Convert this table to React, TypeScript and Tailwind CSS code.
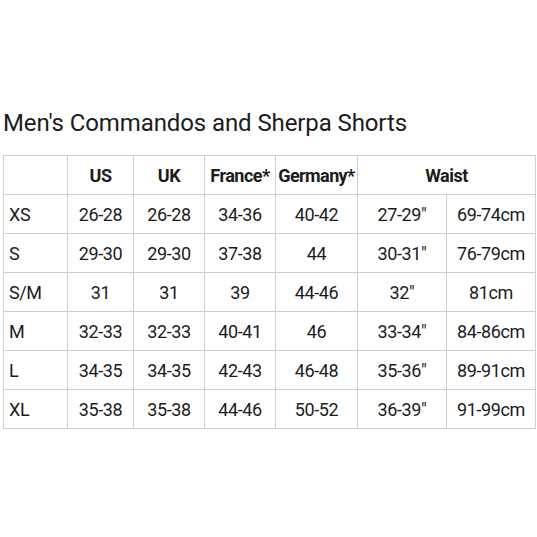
import React from "react";

const rows = [
  ["XS", "26-28", "26-28", "34-36", "40-42", "27-29\"", "69-74cm"],
  ["S", "29-30", "29-30", "37-38", "44", "30-31\"", "76-79cm"],
  ["S/M", "31", "31", "39", "44-46", "32\"", "81cm"],
  ["M", "32-33", "32-33", "40-41", "46", "33-34\"", "84-86cm"],
  ["L", "34-35", "34-35", "42-43", "46-48", "35-36\"", "89-91cm"],
  ["XL", "35-38", "35-38", "44-46", "50-52", "36-39\"", "91-99cm"],
];

const widths = [64, 66, 71, 71, 82, 89, 89];

export default function App() {
  return (
    <div
      className="w-[537px] h-[537px] bg-white text-[#1c1c1c] pt-[107px] pl-[3px]"
      style={{ fontFamily: "Roboto, 'Liberation Sans', sans-serif" }}
    >
      <div className="text-[24px] leading-[32px] tracking-[-0.1px]">Men's Commandos and Sherpa Shorts</div>
      <table className="mt-[16px] border-collapse border border-[#cfcfcf] table-fixed w-[533px]">
        <colgroup>
          {widths.map((w, i) => (
            <col key={i} style={{ width: w }} />
          ))}
        </colgroup>
        <thead>
          <tr className="h-[39px]">
            <th className="border border-[#cfcfcf]"></th>
            <th className="border border-[#cfcfcf] text-[18px] tracking-[-0.5px] font-bold">US</th>
            <th className="border border-[#cfcfcf] text-[18px] tracking-[-0.5px] font-bold">UK</th>
            <th className="border border-[#cfcfcf] text-[18px] tracking-[-0.5px] font-bold">France*</th>
            <th className="border border-[#cfcfcf] text-[18px] tracking-[-0.6px] font-bold whitespace-nowrap">Germany*</th>
            <th colSpan={2} className="border border-[#cfcfcf] text-[18px] tracking-[-0.5px] font-bold">Waist</th>
          </tr>
        </thead>
        <tbody>
          {rows.map((r, ri) => (
            <tr key={ri} className="h-[39px]">
              {r.map((c, ci) => (
                <td
                  key={ci}
                  className={`border border-[#cfcfcf] text-[18px] tracking-[-0.4px] ${ci === 0 ? "text-left pl-[5px]" : "text-center"}`}
                >
                  {c}
                </td>
              ))}
            </tr>
          ))}
        </tbody>
      </table>
    </div>
  );
}
